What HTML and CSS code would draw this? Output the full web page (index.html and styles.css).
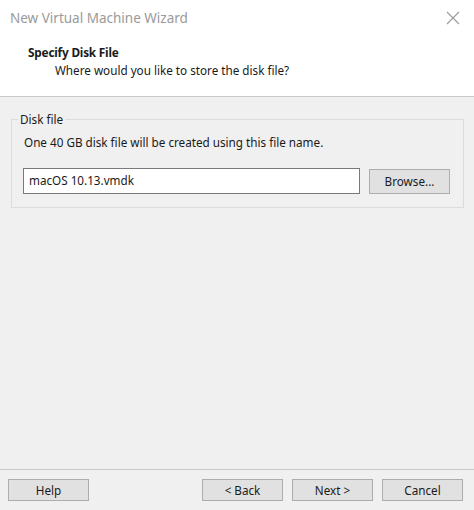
FILE: index.html
```html
<!DOCTYPE html>
<html>
<head>
<meta charset="utf-8">
<link rel="stylesheet" href="styles.css">
</head>
<body>
<div class="window">
  <div class="header">
    <div class="titlebar">
      <span class="title">New Virtual Machine Wizard</span>
      <svg class="close" width="14" height="14" viewBox="0 0 14 14"><path d="M1 1 L13 13 M13 1 L1 13" stroke="#9a9a9a" stroke-width="1.1" fill="none"/></svg>
    </div>
    <div class="heading">Specify Disk File</div>
    <div class="subheading">Where would you like to store the disk file?</div>
  </div>
  <div class="content">
    <fieldset class="group">
      <legend>Disk file</legend>
      <div class="info">One 40 GB disk file will be created using this file name.</div>
      <div class="filerow">
        <div class="input">macOS 10.13.vmdk</div>
        <div class="btn browse">Browse...</div>
      </div>
    </fieldset>
  </div>
  <div class="footer">
    <div class="btn">Help</div>
    <div class="spacer"></div>
    <div class="btn">&lt; Back</div>
    <div class="btn">Next &gt;</div>
    <div class="btn">Cancel</div>
  </div>
</div>
</body>
</html>
```
FILE: styles.css
```css
html, body {
  margin: 0;
  padding: 0;
}
body {
  width: 474px;
  height: 510px;
  overflow: hidden;
  font-family: "Noto Sans", "Open Sans", sans-serif;
  font-size: 11.7px;
  color: #1a1a1a;
  background: #f0f0f0;
}
.window {
  display: flex;
  flex-direction: column;
  height: 510px;
}
.header {
  background: #ffffff;
  height: 97px;
  box-sizing: border-box;
  border-bottom: 1px solid #c8c8c8;
}
.titlebar {
  display: flex;
  justify-content: space-between;
  align-items: center;
  height: 36px;
  padding: 0 14px 0 10px;
}
.title {
  font-size: 13.5px;
  color: #9a9a9a;
}
.heading {
  font-weight: bold;
  font-size: 11.8px;
  letter-spacing: -0.2px;
  padding-left: 28px;
  margin-top: 7px;
  line-height: 18px;
}
.subheading {
  padding-left: 55px;
  line-height: 18px;
}
.content {
  flex: 1;
  padding: 14px 10px 0 11px;
}
.group {
  margin: 0;
  border: 1px solid #dcdcdc;
  padding: 6px 13px 13px 11px;
  width: 427px;
}
legend {
  padding: 0 2px;
  margin-left: -5px;
  line-height: 16px;
}
.info {
  line-height: 18px;
  padding-left: 1px;
}
.filerow {
  display: flex;
  align-items: center;
  margin-top: 17px;
}
.input {
  box-sizing: border-box;
  width: 337px;
  height: 26px;
  background: #fff;
  border: 1px solid #7a7a7a;
  padding: 0 5px;
  line-height: 23px;
}
.btn {
  box-sizing: border-box;
  width: 81px;
  height: 22px;
  background: #e1e1e1;
  border: 1px solid #adadad;
  text-align: center;
  line-height: 20px;
}
.browse {
  margin-left: 9px;
  height: 25px;
  line-height: 23px;
  margin-top: 1px;
}
.footer {
  box-sizing: border-box;
  border-top: 1px solid #c8c8c8;
  height: 41px;
  display: flex;
  align-items: flex-start;
  padding: 9px 11px 0 8px;
  gap: 9px;
}
.spacer {
  flex: 1;
}
```
